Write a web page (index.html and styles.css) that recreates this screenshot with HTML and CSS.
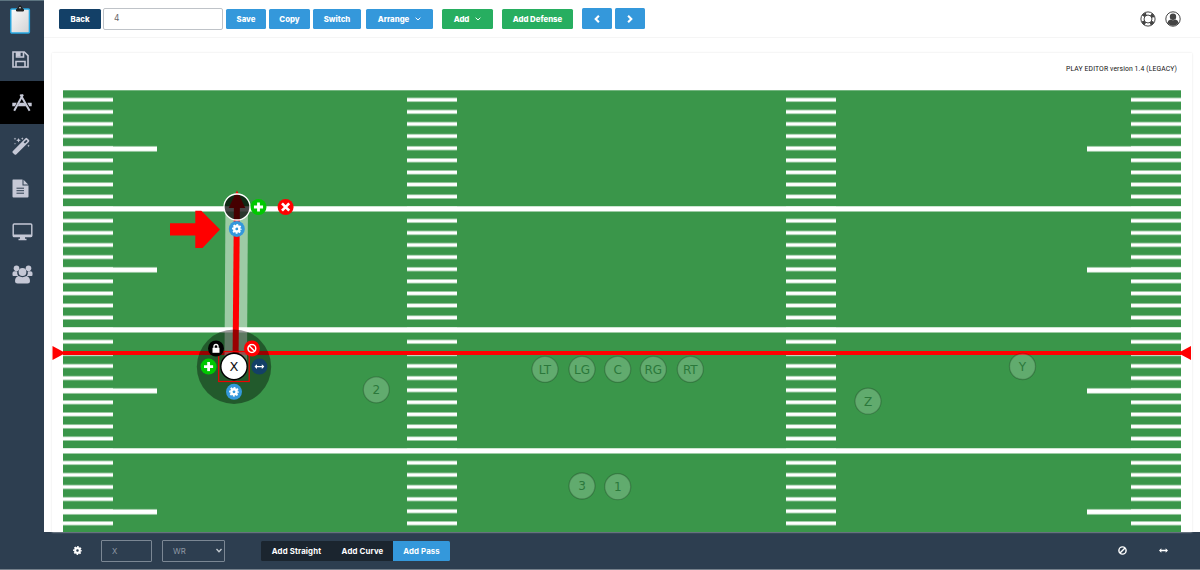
FILE: index.html
```html
<!DOCTYPE html>
<html lang="en">
<head>
    <meta charset="UTF-8">
    <meta name="viewport" content="width=device-width, initial-scale=1.0">
    <title>Play Editor</title>
    <link rel="stylesheet" href="styles.css">
</head>
<body>
    <!-- shared icons -->
    <svg class="defs" width="0" height="0">
        <symbol id="gear" viewBox="0 0 10 10">
            <circle cx="5" cy="5" r="2.600" fill="none" stroke="currentColor" stroke-width="2.400"/>
            <circle cx="5" cy="5" r="4.100" fill="none" stroke="currentColor" stroke-width="1.600" stroke-dasharray="1.800 1.420" stroke-dashoffset="0.900"/>
        </symbol>
        <symbol id="ban" viewBox="0 0 10 10">
            <circle cx="5" cy="5" r="4" fill="none" stroke="currentColor" stroke-width="1.600"/>
            <path d="M2.200 2.200l5.600 5.600" stroke="currentColor" stroke-width="1.600"/>
        </symbol>
        <symbol id="arrows" viewBox="0 0 10 10">
            <path d="M0 5l2.600-2.400v1.700h4.800V2.600L10 5 7.400 7.400V5.700H2.600v1.700z" fill="currentColor"/>
        </symbol>
        <symbol id="plus" viewBox="0 0 10 10">
            <path d="M5 .4v9.200M.4 5h9.200" stroke="currentColor" stroke-width="2.800"/>
        </symbol>
    </svg>

    <div class="workspace">
        <nav class="sidebar">
            <a class="logo" href="#">
                <svg width="22" height="30" viewBox="0 0 22 30">
                    <defs>
                        <linearGradient id="paper" x1="0" y1="0" x2="1" y2="1">
                            <stop offset="0" stop-color="#fafafa"/>
                            <stop offset="1" stop-color="#d2d2d4"/>
                        </linearGradient>
                    </defs>
                    <rect x="1.800" y="4" width="18.600" height="24" rx="1" fill="url(#paper)" stroke="#27a9e3" stroke-width="1.400"/>
                    <path d="M7.500 6V4.300l2-1.300C9.500 1.500 10 .8 11 .8s1.500.7 1.500 2.200l2 1.300V6z" fill="#222" stroke="#222" stroke-linejoin="round"/>
                    <circle cx="11" cy="2.800" r=".8" fill="#fff"/>
                </svg>
            </a>
            <a href="#">
                <svg width="17" height="17" viewBox="0 0 17 17" fill="none" stroke="currentColor" stroke-width="1.600">
                    <path d="M1 1h11.300L16 4.700V16H1z"/>
                    <path d="M4 16v-5.500h9V16M4.500 1v5h7V1"/>
                    <path d="M5 1h3.600v4.500H5z" fill="currentColor" stroke="none"/>
                </svg>
            </a>
            <a class="active" href="#">
                <svg width="20" height="18" viewBox="0 0 20 18" fill="none" stroke="currentColor" stroke-width="2">
                    <path d="M2.200 16.800L11 .6M8.400 .6L17.600 16.800"/>
                    <path d="M.3 8.800h4.400L3 12.300H.3zM7.600 8.800h4.800l2 3.500H5.700zM15.300 8.800h4.400v3.500h-2.500z" fill="currentColor" stroke="none"/>
                </svg>
            </a>
            <a href="#">
                <svg width="18" height="18" viewBox="0 0 18 18" fill="currentColor">
                    <path fill-rule="evenodd" d="M.7 14.200L13.500 1.200q.8-.7 1.600 0l1.900 1.900q.7.800 0 1.600L4.200 17.400q-.8.600-1.600 0L.7 15.700q-.6-.7 0-1.500zM11.600 5.300l1.400 1.300 2.600-2.500-1.300-1.300z"/>
                    <path d="M6.500 1l.7 1.600 1.600.7-1.600.7-.7 1.600L5.800 4l-1.600-.7 1.600-.7zM3 .5l.4.900.9.400-.9.400-.4.900-.4-.9-.9-.4.9-.4zM10.300 .3l.4.900.9.400-.9.400-.4.900-.4-.9-.9-.4.900-.4zM16.500 7.500l.4.900.9.400-.9.400-.4.900-.4-.9-.9-.4.900-.4zM3 5.800l.3.700.7.300-.7.300-.3.700-.3-.7-.7-.3.700-.3z"/>
                </svg>
            </a>
            <a href="#">
                <svg width="17" height="19" viewBox="0 0 17 19">
                    <path d="M1 .5h9.500V6.500h6V17.500q0 1-1 1H1.500q-1 0-1-1V1.300Q.5 .5 1 .5z" fill="currentColor"/>
                    <path d="M11.500 .8l4.700 4.700h-4.700z" fill="currentColor"/>
                    <path d="M4.500 9.200h7.500M4.500 11.700h7.500M4.500 14.200h7.500" stroke="#2d3e50" stroke-width="1"/>
                </svg>
            </a>
            <a href="#">
                <svg width="21" height="18" viewBox="0 0 21 18">
                    <rect x="1.200" y="1" width="18.600" height="12.500" rx="1" fill="none" stroke="currentColor" stroke-width="1.400"/>
                    <path d="M1 11.500h19V14H1zM8 14h5v1.800h1.500v1.500h-8v-1.500H8z" fill="currentColor"/>
                </svg>
            </a>
            <a href="#">
                <svg width="21" height="19" viewBox="0 0 21 19" fill="currentColor">
                    <circle cx="4.500" cy="3.200" r="2.800"/>
                    <circle cx="16.500" cy="3.200" r="2.800"/>
                    <path d="M.5 10V8q0-1.800 2-1.800h2.700Q4.800 9 6.300 11H1.500q-1 0-1-1zM20.500 10V8q0-1.800-2-1.800h-2.700Q16.200 9 14.700 11h4.800q1 0 1-1z"/>
                    <circle cx="10.500" cy="7" r="3.900"/>
                    <path d="M6.500 11q4 2.300 8 0 3.500 1 3.500 5.200 0 2.400-2.500 2.400h-10Q3 18.600 3 16.200 3 12 6.500 11z"/>
                </svg>
            </a>
        </nav>

        <main>
            <header class="toolbar">
                <button class="btn navy back">Back</button>
                <input class="play-name" type="text" value="4">
                <button class="btn save">Save</button>
                <button class="btn copy">Copy</button>
                <button class="btn switch">Switch</button>
                <button class="btn arrange">Arrange
                    <svg width="6" height="4" viewBox="0 0 6 4"><path d="M.6 .7L3 3 5.400 .7" fill="none" stroke="#fff"/></svg>
                </button>
                <button class="btn green add">Add
                    <svg width="6" height="4" viewBox="0 0 6 4"><path d="M.6 .7L3 3 5.400 .7" fill="none" stroke="#fff"/></svg>
                </button>
                <button class="btn green defense">Add Defense</button>
                <button class="btn step prev">
                    <svg width="6" height="8" viewBox="0 0 6 8"><path d="M4.900 .8L1.700 4l3.200 3.200" fill="none" stroke="#fff" stroke-width="2.100"/></svg>
                </button>
                <button class="btn step">
                    <svg width="6" height="8" viewBox="0 0 6 8"><path d="M1.100 .8L4.300 4 1.100 7.200" fill="none" stroke="#fff" stroke-width="2.100"/></svg>
                </button>
                <div class="account">
                    <svg width="16" height="16" viewBox="0 0 16 16" fill="none" stroke="#444">
                        <circle cx="8" cy="8" r="7.100"/>
                        <circle cx="8" cy="8" r="4"/>
                        <circle cx="8" cy="8" r="5.500" stroke-width="3" stroke-dasharray="3.600 5.040" stroke-dashoffset="-2.520"/>
                    </svg>
                    <svg width="16" height="16" viewBox="0 0 16 16">
                        <circle cx="8" cy="8" r="7.200" fill="none" stroke="#444"/>
                        <circle cx="8" cy="5.800" r="3.200" fill="#444"/>
                        <path d="M2.400 12q.3-2.900 3-3.500 2.600 1.600 5.200 0 2.700.6 3 3.500Q11 14.800 8 14.800T2.400 12z" fill="#444"/>
                    </svg>
                </div>
            </header>

            <section class="card">
                <p class="version">PLAY EDITOR version 1.4 (LEGACY)</p>
                <svg class="field" width="1140" height="442" viewBox="52 90 1140 442">
                    <defs>
                        <pattern id="ticks" x="0" y="93.750" width="1200" height="12.100" patternUnits="userSpaceOnUse">
                            <path d="M63 6.050h50M407 6.050h50M786 6.050h50M1131 6.050h50" stroke="#fff" stroke-width="3.700"/>
                        </pattern>
                        <pattern id="yards" x="0" y="87.900" width="1200" height="121" patternUnits="userSpaceOnUse">
                            <path d="M63 61h94M1087 61h94" stroke="#fff" stroke-width="5.200"/>
                        </pattern>
                    </defs>
                    <rect x="63" y="90.300" width="1118" height="442" fill="#3a964a"/>
                    <rect x="63" y="94" width="1118" height="438" fill="url(#ticks)"/>
                    <rect x="63" y="90.300" width="1118" height="442" fill="url(#yards)"/>
                    <path d="M63 208.900h1118M63 329.800h1118M63 450.900h1118" stroke="#fff" stroke-width="5.200"/>

                    <!-- line of scrimmage -->
                    <path d="M63 352.900h1118" stroke="#f00" stroke-width="4"/>
                    <path d="M52.500 346l13 7-13 7zM1191 346l-13 7 13 7z" fill="#f00"/>

                    <g class="player">
                        <circle cx="545" cy="369.300" r="13"/><text x="545" y="373.500">LT</text>
                        <circle cx="582" cy="369.300" r="13"/><text x="582" y="373.500">LG</text>
                        <circle cx="617.700" cy="369.300" r="13"/><text x="617.700" y="373.500">C</text>
                        <circle cx="653.300" cy="369.300" r="13"/><text x="653.300" y="373.500">RG</text>
                        <circle cx="690.300" cy="369.300" r="13"/><text x="690.300" y="373.500">RT</text>
                        <circle cx="376.300" cy="389.800" r="13"/><text x="376.300" y="394">2</text>
                        <circle cx="582" cy="486" r="13"/><text x="582" y="490.300">3</text>
                        <circle cx="617.700" cy="486.700" r="13"/><text x="617.700" y="491">1</text>
                        <circle cx="868" cy="401.200" r="13"/><text x="868" y="405.500">Z</text>
                        <circle cx="1022.500" cy="366.500" r="13"/><text x="1022.500" y="370.800">Y</text>
                    </g>

                    <!-- route of the selected player -->
                    <path d="M236.700 207L235.700 366" stroke="#fff" stroke-opacity=".5" stroke-width="22.500"/>
                    <path d="M236.900 205L235.500 366" stroke="#f00" stroke-width="6"/>
                    <path d="M237 190.500l8.300 17.500h-16.600z" fill="#f00"/>
                    <circle cx="237" cy="207" r="13" fill="#000" fill-opacity=".73" stroke="#fff" stroke-width="1.300"/>
                    <circle cx="234" cy="366.700" r="37.200" fill="#000" fill-opacity=".4"/>
                    <rect x="218.700" y="351.500" width="30.500" height="30" fill="none" stroke="#f00000" stroke-width="1.200"/>
                    <circle cx="234" cy="366.500" r="13.200" fill="#fff" stroke="#000" stroke-width="1.400"/>
                    <text class="label" x="234" y="371.200">X</text>

                    <g class="handles">
                        <circle cx="216" cy="348.500" r="8" fill="#000"/>
                        <path d="M212.500 347.800h7v5h-7z" fill="#fff"/>
                        <path d="M214 348v-1.500a2 2 0 0 1 4 0v1.500" fill="none" stroke="#fff" stroke-width="1.300"/>
                        <circle cx="251.900" cy="348.500" r="8" fill="#f00"/>
                        <use href="#ban" x="247" y="343.600" width="9.800" height="9.800"/>
                        <circle cx="208.600" cy="366.600" r="8" fill="#00c800"/>
                        <use href="#plus" x="203.600" y="361.600" width="10" height="10"/>
                        <circle cx="259.400" cy="366.600" r="8" fill="#134067"/>
                        <use href="#arrows" x="254.400" y="361.600" width="10" height="10"/>
                        <circle cx="234" cy="391.800" r="8" fill="#3498db"/>
                        <use href="#gear" x="229" y="386.800" width="10" height="10"/>
                        <circle cx="236.800" cy="228.900" r="8" fill="#3498db"/>
                        <use href="#gear" x="231.800" y="223.900" width="10" height="10"/>
                        <circle cx="258.500" cy="207" r="8" fill="#00c800"/>
                        <use href="#plus" x="253.500" y="202" width="10" height="10"/>
                        <circle cx="285.600" cy="207" r="8" fill="#f00"/>
                        <path d="M282 203.400l7.200 7.200M289.200 203.400l-7.200 7.200" stroke="#fff" stroke-width="2.700"/>
                    </g>
                    <path d="M170 223.300h25.300v-12.500h6L220 229.500l-17.500 18.500h-7.200v-12.400H170z" fill="#f00"/>
                </svg>
            </section>
        </main>
    </div>

    <footer class="bottom-bar">
        <svg class="gear" width="9" height="9"><use href="#gear"/></svg>
        <input class="player-name" type="text" value="X">
        <div class="position">WR
            <svg width="6" height="5" viewBox="0 0 6 5"><path d="M.5 1L3 3.700 5.500 1" fill="none" stroke="#c5cbd1" stroke-width="1.300"/></svg>
        </div>
        <div class="group">
            <button class="straight">Add Straight</button>
            <button class="curve">Add Curve</button>
            <button class="pass">Add Pass</button>
        </div>
        <svg class="flip" width="9" height="9"><use href="#ban"/></svg>
        <svg width="9" height="9"><use href="#arrows"/></svg>
    </footer>
</body>
</html>
```

FILE: styles.css
```css
* {
    box-sizing: border-box;
}
body {
    margin: 0;
    height: 570px;
    overflow: hidden;
    font-family: Inter, "Open Sans", sans-serif;
    background-color: #fff;
}
.defs {
    display: none;
}
svg {
    display: block;
    flex: none;
}
button, input {
    font-family: inherit;
    margin: 0;
    padding: 0;
}
.workspace {
    display: flex;
    height: 532px;
}

/* sidebar */
.sidebar {
    width: 44px;
    flex: none;
    background-color: #2d3e50;
    border-top: 1px solid #5c7480;
}
.sidebar a {
    display: flex;
    align-items: center;
    height: 43px;
    padding-left: 12px;
    color: #c5c8d6;
}
.sidebar .logo {
    height: 37px;
    padding: 1px 0 0 9px;
}
.sidebar .active {
    background-color: #000;
}

/* toolbar */
main {
    width: 1156px;
}
.toolbar {
    display: flex;
    align-items: center;
    height: 38px;
    padding: 0 19px 0 15px;
    border-bottom: 1px solid #f5f5f5;
}
.btn {
    display: flex;
    align-items: center;
    justify-content: center;
    height: 20px;
    border: none;
    border-radius: 1.5px;
    background-color: #3498db;
    color: #fff;
    font-size: 7.8px;
    font-weight: 800;
    white-space: nowrap;
    margin-right: 3px;
}
.navy {
    background-color: #134067;
}
.green {
    background-color: #27ae60;
}
.back {
    width: 42px;
}
.play-name {
    width: 120px;
    height: 22px;
    margin-right: 3px;
    padding: 0 0 1px 10px;
    border: 1px solid #bfc3c8;
    border-radius: 2px;
    color: #666;
    font-size: 8.4px;
}
.toolbar .back {
    margin-right: 2px;
}
.save {
    width: 40px;
}
.copy {
    width: 41px;
}
.switch {
    width: 48px;
}
.arrange {
    width: 67px;
    gap: 6px;
    margin: 0 9px 0 2px;
}
.add {
    width: 51px;
    gap: 6px;
    margin-right: 9px;
}
.defense {
    width: 71px;
    margin-right: 9px;
}
.step {
    width: 30px;
    height: 21px;
}
.account {
    display: flex;
    gap: 9px;
    margin-left: auto;
}

/* field card */
.card {
    width: 1140px;
    height: 479px;
    margin: 15px 0 0 8px;
    box-shadow: 0 0 2px #e4e4e4;
}
.version {
    height: 37px;
    margin: 0;
    padding: 11px 15px 0 0;
    text-align: right;
    font-family: Roboto, sans-serif;
    font-size: 6.8px;
    line-height: 11px;
    letter-spacing: 0.12px;
    color: #111;
}
.player circle {
    fill: rgba(255, 255, 255, 0.2);
    stroke: rgba(0, 0, 0, 0.2);
    stroke-width: 1.3;
}
.player text, .label {
    font-family: "DejaVu Sans", sans-serif;
    font-size: 12px;
    text-anchor: middle;
    fill: #2b783b;
}
.field .label {
    font-size: 13px;
    fill: #111;
}
.handles {
    color: #fff;
}

/* bottom bar */
.bottom-bar {
    display: flex;
    align-items: center;
    height: 38px;
    padding: 0 32px 0 73px;
    background-color: #2d3e50;
    border-bottom: 1px solid #76808b;
    color: #fff;
}
.player-name, .position {
    height: 22px;
    border: 1px solid #7b8794;
    border-radius: 1px;
    background: transparent;
    color: #8d98a4;
    font-size: 7.8px;
}
.player-name {
    width: 51px;
    margin: 0 10px 0 19px;
    padding-left: 10px;
}
.position {
    display: flex;
    align-items: center;
    justify-content: space-between;
    width: 63px;
    padding: 0 2px 0 10px;
}
.group {
    display: flex;
    margin-left: 36px;
    border-radius: 1.5px;
    overflow: hidden;
}
.group button {
    height: 20px;
    border: none;
    background-color: #1b252f;
    color: #fff;
    font-size: 7.8px;
    font-weight: 700;
    letter-spacing: 0.15px;
    white-space: nowrap;
}
.group .straight {
    width: 71px;
}
.group .curve {
    width: 61px;
}
.group .pass {
    width: 57px;
    background-color: #3498db;
}
.flip {
    margin: 0 32px 0 auto;
    transform: scaleX(-1);
}
```
